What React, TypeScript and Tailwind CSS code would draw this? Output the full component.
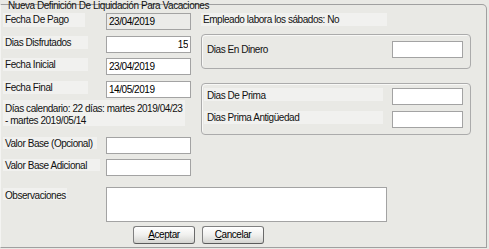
import React from "react";

type FieldProps = {
  value?: string;
  className?: string;
  right?: boolean;
  disabled?: boolean;
};

function Field({ value = "", className = "", right = false, disabled = false }: FieldProps) {
  return (
    <input
      readOnly
      value={value}
      className={`h-[17px] border border-[#a3a3a3] px-[2px] outline-none text-black ${
        disabled ? "bg-[#ebebe9]" : "bg-white"
      } ${right ? "text-right" : ""} ${className}`}
    />
  );
}

function Btn({ first, rest }: { first: string; rest: string }) {
  return (
    <button className="w-[62px] h-[18px] rounded-[3px] border border-[#808080] border-b-[#5a5a5a] border-r-[#6a6a6a] bg-gradient-to-b from-[#ffffff] via-[#f0f0ee] to-[#d4d4d0] shadow-[inset_0_1px_0_#ffffff] text-black leading-[14px] flex items-center justify-center">
      <span>
        <span className="underline">{first}</span>
        {rest}
      </span>
    </button>
  );
}

export default function App() {
  return (
    <div className="w-[489px] h-[249px] bg-[#e9e9e5] overflow-hidden pt-[4px] font-['Liberation_Sans',Arial,sans-serif] text-[10px] leading-[12px] tracking-[-0.45px] text-[#111]">
      <div className="relative w-[487px] h-[244px] border-t border-r border-b border-l border-t-[#a0a0a0] border-r-[#a0a0a0] border-b-[#a0a0a0] border-l-[#f4f4f2] rounded-tr-[5px]">
        <div className="absolute left-[7px] top-[-5px] whitespace-nowrap">
          Nueva Definición De Liquidación Para Vacaciones
        </div>

        <div className="flex pt-[8px] pl-[2px]">
          {/* left column */}
          <div className="flex flex-col w-[188px]">
            <div className="flex items-start">
              <div className="w-[103px]">
                <div className="w-[82px] h-[14px] bg-[#f1f1ef] pl-[2px] pt-[1px]">Fecha De Pago</div>
              </div>
              <Field value="23/04/2019" disabled className="w-[85px]" />
            </div>
            <div className="flex items-start mt-[6px]">
              <div className="w-[103px]">
                <div className="w-[85px] h-[13px] bg-[#f1f1ef] pl-[2px] pt-[1px]">Dias Disfrutados</div>
              </div>
              <Field value="15" right className="w-[85px]" />
            </div>
            <div className="flex items-start mt-[5px]">
              <div className="w-[103px]">
                <div className="w-[85px] h-[13px] bg-[#f1f1ef] pl-[2px] pt-[1px]">Fecha Inicial</div>
              </div>
              <Field value="23/04/2019" className="w-[85px]" />
            </div>
            <div className="flex items-start mt-[6px]">
              <div className="w-[103px]">
                <div className="w-[85px] h-[13px] bg-[#f1f1ef] pl-[2px] pt-[1px]">Fecha Final</div>
              </div>
              <Field value="14/05/2019" className="w-[85px]" />
            </div>
            <div className="mt-[2px] w-[182px] h-[26px] bg-[#f1f1ef] pl-[2px] pt-[3px] whitespace-nowrap">
              Días calendario: 22 días: martes 2019/04/23
              <br />- martes 2019/05/14
            </div>
          </div>

          {/* right column */}
          <div className="flex flex-col ml-[10px] w-[270px]">
            <div className="w-[186px] h-[13px] bg-[#f1f1ef] pl-[2px] pt-[1px]">
              Empleado labora los sábados: No
            </div>
            <div className="mt-[8px] h-[35px] border border-[#ababab] rounded-[4px] shadow-[inset_1px_1px_0_#f8f8f6] pt-[6px] pl-[2px] pr-[7px] flex items-start">
              <div className="flex-1 pl-[3px] pt-[3px]">Dias En Dinero</div>
              <Field className="w-[71px]" />
            </div>
            <div className="mt-[14px] h-[52px] border border-[#ababab] rounded-[4px] shadow-[inset_1px_1px_0_#f8f8f6] pt-[4px] pl-[2px] pr-[7px] flex flex-col">
              <div className="flex items-start">
                <div className="flex-1">
                  <div className="w-[179px] h-[13px] bg-[#f1f1ef] pl-[3px] pt-[2px]">Dias De Prima</div>
                </div>
                <Field className="w-[71px]" />
              </div>
              <div className="flex items-start mt-[6px]">
                <div className="flex-1">
                  <div className="w-[179px] h-[13px] bg-[#f1f1ef] pl-[3px] pt-[1px]">Dias Prima Antigüedad</div>
                </div>
                <Field className="w-[71px]" />
              </div>
            </div>
          </div>
        </div>

        <div className="flex flex-col pl-[2px]">
          <div className="flex items-start mt-[2px]">
            <div className="w-[103px]">
              <div className="w-[94px] h-[12px] bg-[#f1f1ef] pl-[2px] pt-[1px]">Valor Base (Opcional)</div>
            </div>
            <Field className="w-[85px]" />
          </div>
          <div className="flex items-start mt-[5px]">
            <div className="w-[103px]">
              <div className="w-[97px] h-[12px] bg-[#f1f1ef] pl-[2px] pt-[1px]">Valor Base Adicional</div>
            </div>
            <Field className="w-[85px]" />
          </div>
          <div className="flex items-start mt-[11px]">
            <div className="w-[103px] pt-[1px]">
              <div className="w-[64px] h-[12px] bg-[#f1f1ef] pl-[2px] pt-[2px]">Observaciones</div>
            </div>
            <textarea
              readOnly
              className="w-[281px] h-[35px] border border-[#a3a3a3] bg-white resize-none outline-none"
            />
          </div>
          <div className="flex mt-[4px] pl-[130px] gap-[7px]">
            <Btn first="A" rest="ceptar" />
            <Btn first="C" rest="ancelar" />
          </div>
        </div>
      </div>
    </div>
  );
}
